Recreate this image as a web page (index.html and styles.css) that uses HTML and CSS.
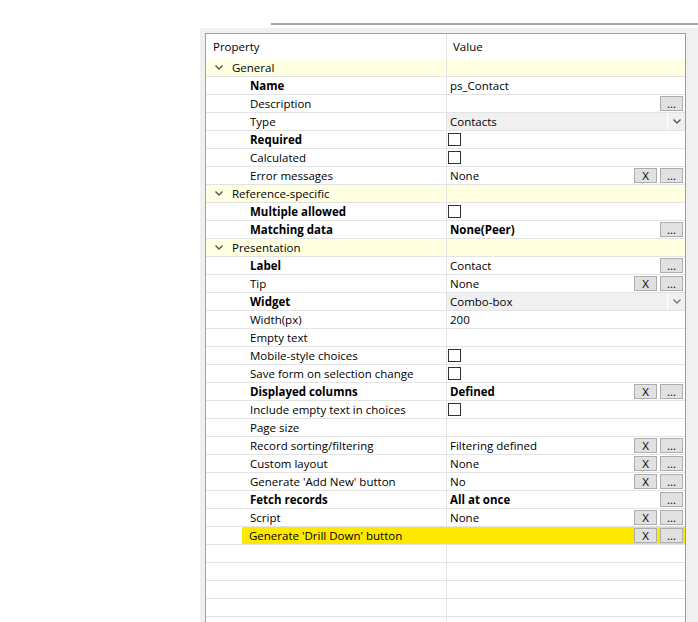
FILE: index.html
```html
<!DOCTYPE html>
<html>
<head>
<meta charset="utf-8">
<link rel="stylesheet" href="styles.css">
</head>
<body>
<div class="topline"></div>
<div class="panel">
  <div class="grid">
    <div class="row head"><div class="k">Property</div><div class="v">Value</div></div>

    <div class="row group"><div class="k"><svg class="chev" viewBox="0 0 8 5" width="8" height="5"><path d="M0.5 0.5 L4 4 L7.5 0.5" fill="none" stroke="#555" stroke-width="1.4"/></svg>General</div><div class="v"></div></div>
    <div class="row"><div class="k b">Name</div><div class="v">ps_Contact</div></div>
    <div class="row"><div class="k">Description</div><div class="v"><span class="fill"></span><span class="btn">...</span></div></div>
    <div class="row"><div class="k">Type</div><div class="v combo"><span class="fill">Contacts</span><span class="drop"><svg viewBox="0 0 8 5" width="8" height="5"><path d="M0.5 0.5 L4 4 L7.5 0.5" fill="none" stroke="#555" stroke-width="1.4"/></svg></span></div></div>
    <div class="row"><div class="k b">Required</div><div class="v"><span class="cb"></span></div></div>
    <div class="row"><div class="k">Calculated</div><div class="v"><span class="cb"></span></div></div>
    <div class="row"><div class="k">Error messages</div><div class="v"><span class="fill">None</span><span class="btn">X</span><span class="btn">...</span></div></div>

    <div class="row group"><div class="k"><svg class="chev" viewBox="0 0 8 5" width="8" height="5"><path d="M0.5 0.5 L4 4 L7.5 0.5" fill="none" stroke="#555" stroke-width="1.4"/></svg>Reference-specific</div><div class="v"></div></div>
    <div class="row"><div class="k b">Multiple allowed</div><div class="v"><span class="cb"></span></div></div>
    <div class="row"><div class="k b">Matching data</div><div class="v"><span class="fill b">None(Peer)</span><span class="btn">...</span></div></div>

    <div class="row group"><div class="k"><svg class="chev" viewBox="0 0 8 5" width="8" height="5"><path d="M0.5 0.5 L4 4 L7.5 0.5" fill="none" stroke="#555" stroke-width="1.4"/></svg>Presentation</div><div class="v"></div></div>
    <div class="row"><div class="k b">Label</div><div class="v"><span class="fill">Contact</span><span class="btn">...</span></div></div>
    <div class="row"><div class="k">Tip</div><div class="v"><span class="fill">None</span><span class="btn">X</span><span class="btn">...</span></div></div>
    <div class="row"><div class="k b">Widget</div><div class="v combo"><span class="fill">Combo-box</span><span class="drop"><svg viewBox="0 0 8 5" width="8" height="5"><path d="M0.5 0.5 L4 4 L7.5 0.5" fill="none" stroke="#777" stroke-width="1.4"/></svg></span></div></div>
    <div class="row"><div class="k">Width(px)</div><div class="v">200</div></div>
    <div class="row"><div class="k">Empty text</div><div class="v"></div></div>
    <div class="row"><div class="k">Mobile-style choices</div><div class="v"><span class="cb"></span></div></div>
    <div class="row"><div class="k">Save form on selection change</div><div class="v"><span class="cb"></span></div></div>
    <div class="row"><div class="k b">Displayed columns</div><div class="v"><span class="fill b">Defined</span><span class="btn">X</span><span class="btn">...</span></div></div>
    <div class="row"><div class="k">Include empty text in choices</div><div class="v"><span class="cb"></span></div></div>
    <div class="row"><div class="k">Page size</div><div class="v"></div></div>
    <div class="row"><div class="k">Record sorting/filtering</div><div class="v"><span class="fill">Filtering defined</span><span class="btn">X</span><span class="btn">...</span></div></div>
    <div class="row"><div class="k">Custom layout</div><div class="v"><span class="fill">None</span><span class="btn">X</span><span class="btn">...</span></div></div>
    <div class="row"><div class="k">Generate 'Add New' button</div><div class="v"><span class="fill">No</span><span class="btn">X</span><span class="btn">...</span></div></div>
    <div class="row"><div class="k b">Fetch records</div><div class="v"><span class="fill b">All at once</span><span class="btn">...</span></div></div>
    <div class="row"><div class="k">Script</div><div class="v"><span class="fill">None</span><span class="btn">X</span><span class="btn">...</span></div></div>
    <div class="row sel"><div class="k"><span class="selk">Generate 'Drill Down' button</span></div><div class="v"><span class="fill"></span><span class="btn">X</span><span class="btn">...</span></div></div>

    <div class="row"><div class="k"></div><div class="v"></div></div>
    <div class="row"><div class="k"></div><div class="v"></div></div>
    <div class="row"><div class="k"></div><div class="v"></div></div>
    <div class="row"><div class="k"></div><div class="v"></div></div>
    <div class="row"><div class="k"></div><div class="v"></div></div>
  </div>
</div>
</body>
</html>
```

FILE: styles.css
```css
html, body {
  margin: 0;
  padding: 0;
  background: #ffffff;
  width: 698px;
  height: 622px;
  overflow: hidden;
  font-family: "Segoe UI", "Open Sans", "Noto Sans", sans-serif;
  font-size: 11.5px;
  color: #000;
}

.topline {
  margin: 23px 0 0 271px;
  height: 2px;
  background: #a6a6a6;
}

.panel {
  margin: 3px 0 0 200px;
  background: #f0f0f0;
  height: 594px;
  padding: 5px 12px 0 5px;
}

.grid {
  background: #fff;
  border: 1px solid #a0a0a0;
  border-right-color: #9a9a9a;
  height: 600px;
  overflow: hidden;
}

.row {
  display: grid;
  grid-template-columns: 241px 1fr;
  height: 18px;
  border-bottom: 1px solid #e3e3e3;
  box-sizing: border-box;
}

.k {
  border-right: 1px solid #e3e3e3;
  padding-left: 44px;
  display: flex;
  align-items: center;
  white-space: nowrap;
  overflow: hidden;
}

.v {
  display: flex;
  align-items: center;
  padding: 0 2px 0 3px;
  white-space: nowrap;
}

.b { font-weight: bold; }

.head {
  height: 25px;
  border-bottom: none;
}
.head .k { padding-left: 7px; border-right-color: #e3e3e3; }
.head .v { padding-left: 6px; }

.group { background: #ffffe1; }
.group .k { padding-left: 8px; }
.chev { margin: 0 9px 0 1px; }

.fill { flex: 1; }

.btn {
  width: 23px;
  height: 15px;
  box-sizing: border-box;
  border: 1px solid #adadad;
  background: #e1e1e1;
  margin-left: 3px;
  display: flex;
  align-items: center;
  justify-content: center;
  font-size: 11.5px;
  line-height: 1;
}

.combo { background: #f0f0f0; padding-left: 3px; }
.drop {
  width: 17px;
  height: 17px;
  border-left: 1px solid #fff;
  display: flex;
  align-items: center;
  justify-content: center;
  margin-right: -2px;
}

.cb {
  width: 11px;
  height: 11px;
  border: 1px solid #333;
  background: #fff;
  margin-left: -2px;
}

.sel .k {
  padding-left: 36px;
  border-right: none;
  align-items: stretch;
}
.selk {
  flex: 1;
  background: #ffe800;
  padding-left: 7px;
  display: flex;
  align-items: center;
}
.sel .v { background: #ffe800; }
```
